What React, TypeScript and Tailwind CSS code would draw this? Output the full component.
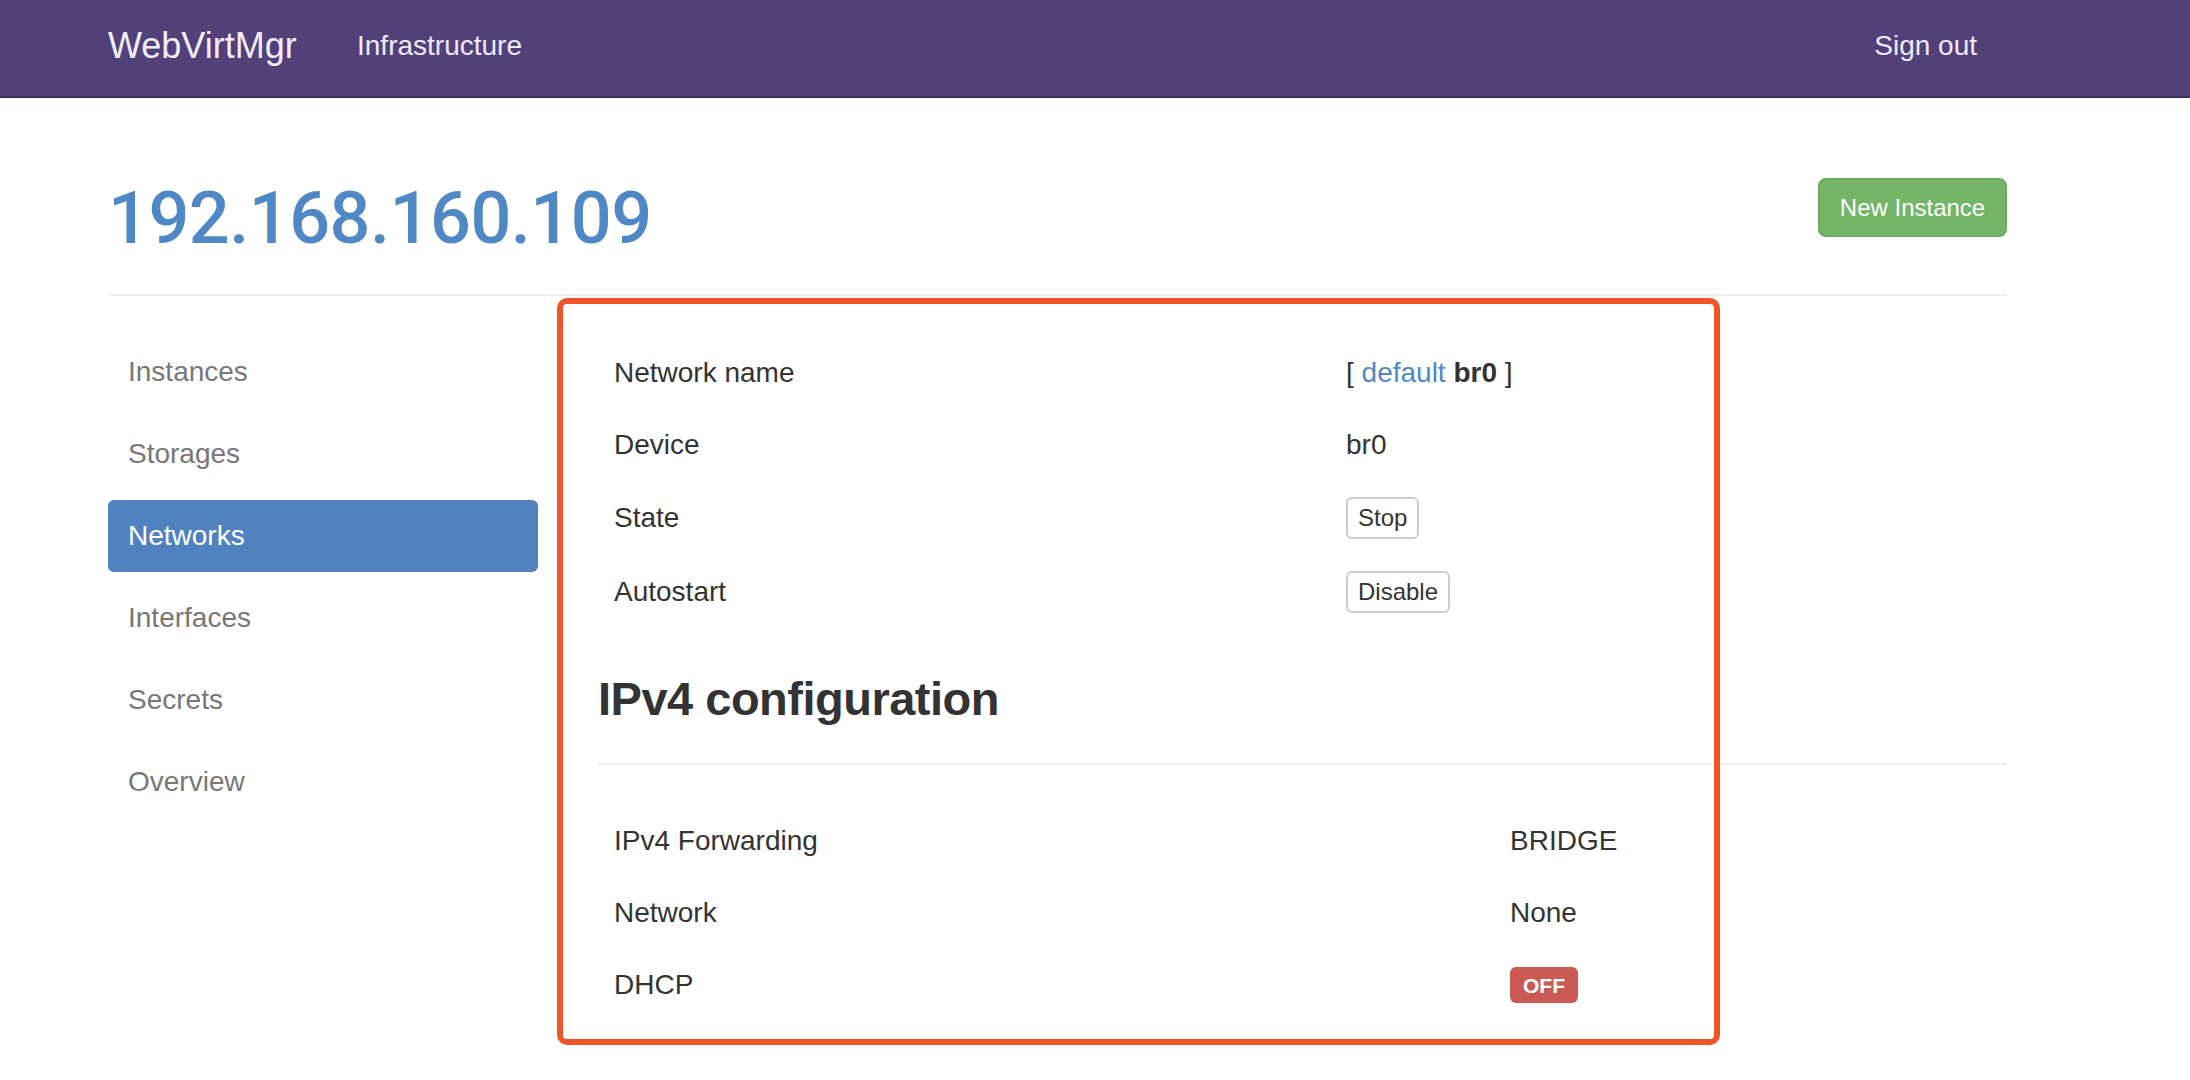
const navLinks = ["Instances", "Storages", "Networks", "Interfaces", "Secrets", "Overview"];

function SmallButton({ label }: { label: string }) {
  return (
    <span className="inline-flex h-[42px] items-center rounded-[6px] border-2 border-[#cccccc] bg-white px-[10px] text-[24px] leading-none text-[#333333]">
      {label}
    </span>
  );
}

function Row({
  label,
  labelWidth,
  height,
  children,
}: {
  label: string;
  labelWidth: string;
  height: string;
  children: React.ReactNode;
}) {
  return (
    <div className={`flex items-center ${height}`}>
      <div className={`${labelWidth} shrink-0 pl-[16px] text-[28px] leading-none text-[#333333]`}>
        {label}
      </div>
      <div className="pl-[16px] text-[28px] leading-none text-[#333333]">{children}</div>
    </div>
  );
}

export default function App() {
  return (
    <div
      className="relative min-h-screen w-full bg-white"
      style={{ fontFamily: '"Liberation Sans", Helvetica, Arial, sans-serif' }}
    >
      {/* top bar */}
      <div className="h-[98px] border-b-2 border-[#3e305c] bg-[#524178]">
        <div className="ml-[108px] flex h-[96px] w-[1899px] items-center pb-[5px] pr-[30px]">
          <span className="w-[249px] text-[36px] leading-none text-[#f1ecfc]">WebVirtMgr</span>
          <span className="text-[28px] leading-none text-[#efe9fb]">Infrastructure</span>
          <span className="ml-auto text-[28px] leading-none text-[#efe9fb]">Sign out</span>
        </div>
      </div>

      <div className="ml-[108px] w-[1899px]">
        {/* page header */}
        <div className="mt-[80px] flex items-start justify-between">
          <h1 className="mt-[5px] font-['Roboto',sans-serif] text-[72px] font-medium leading-none tracking-[-0.5px] text-[#5088c5]">
            192.168.160.109
          </h1>
          <button className="flex h-[59px] w-[189px] items-center justify-center rounded-[8px] border-2 border-[#6aaa5d] bg-[#74b567] text-[24px] leading-none text-white">
            New Instance
          </button>
        </div>
        <div className="mt-[39px] h-[2px] bg-[#eeeeee]" />

        <div className="mt-[40px] flex">
          {/* side menu */}
          <div className="flex w-[430px] shrink-0 flex-col gap-[10px]">
            {navLinks.map((item) => (
              <div
                key={item}
                className={
                  item === "Networks"
                    ? "flex h-[72px] items-center rounded-[6px] bg-[#5082bf] px-[20px] text-[28px] leading-none text-white"
                    : "flex h-[72px] items-center px-[20px] text-[28px] leading-none text-[#777777]"
                }
              >
                {item}
              </div>
            ))}
          </div>

          {/* network details */}
          <div className="ml-[60px] w-[1409px] pt-[1px]">
            <Row label="Network name" labelWidth="w-[732px]" height="h-[72px]">
              <span>
                [ <span className="text-[#4f88c6]">default</span> <b>br0</b> ]
              </span>
            </Row>
            <Row label="Device" labelWidth="w-[732px]" height="h-[72px]">
              br0
            </Row>
            <Row label="State" labelWidth="w-[732px]" height="h-[74px]">
              <SmallButton label="Stop" />
            </Row>
            <Row label="Autostart" labelWidth="w-[732px]" height="h-[74px]">
              <SmallButton label="Disable" />
            </Row>

            <h3 className="mt-[46px] text-[47px] font-bold leading-none tracking-[-0.5px] text-[#333333]">
              IPv4 configuration
            </h3>
            <div className="mt-[41px] h-[2px] bg-[#eeeeee]" />

            <div className="mt-[40px]">
              <Row label="IPv4 Forwarding" labelWidth="w-[896px]" height="h-[72px]">
                BRIDGE
              </Row>
              <Row label="Network" labelWidth="w-[896px]" height="h-[72px]">
                None
              </Row>
              <Row label="DHCP" labelWidth="w-[896px]" height="h-[72px]">
                <span className="inline-flex h-[36px] items-center rounded-[6px] bg-[#c95b54] px-[13px] text-[21px] font-bold leading-none text-white">
                  OFF
                </span>
              </Row>
            </div>
          </div>
        </div>
      </div>

      {/* highlight frame drawn over the details */}
      <div className="pointer-events-none absolute left-[557px] top-[298px] h-[747px] w-[1163px] rounded-[10px] border-[6px] border-[#ee5528]" />
    </div>
  );
}
